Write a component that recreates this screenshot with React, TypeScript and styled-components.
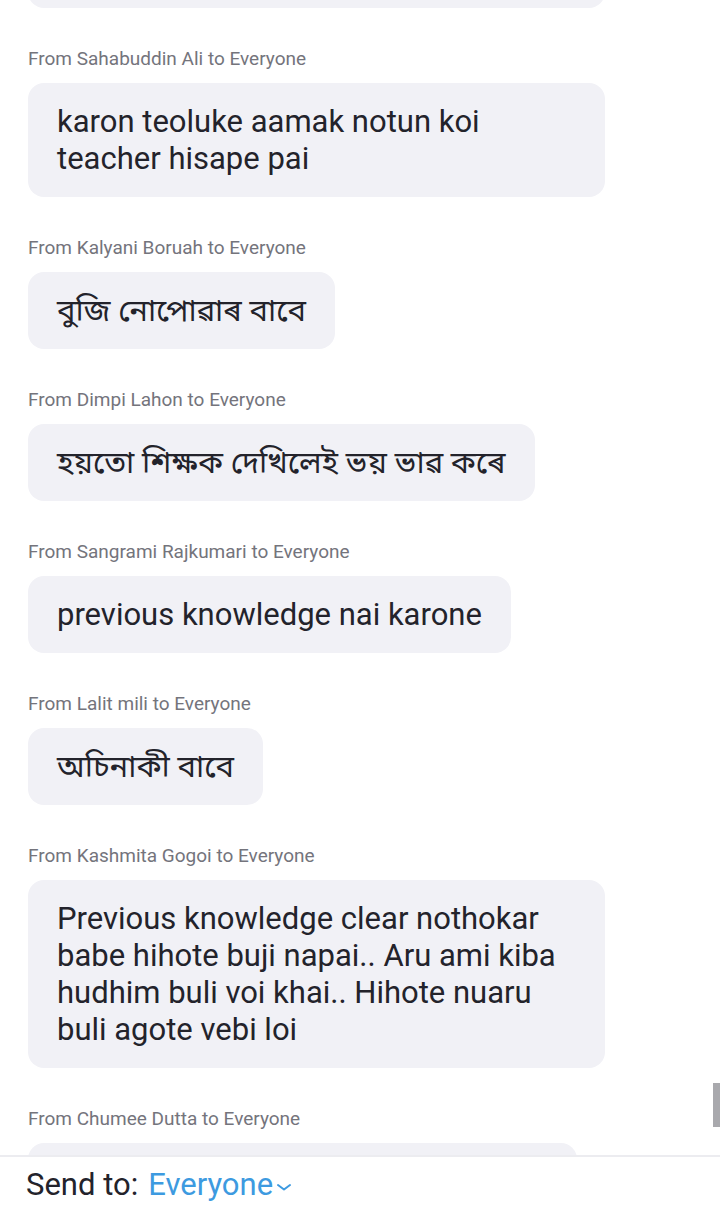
import React from 'react';
import styled, { createGlobalStyle } from 'styled-components';

type Message = {
  from: string,
  text: string
}

const GlobalStyle = createGlobalStyle`
  html, body {
    margin: 0;
    padding: 0;
    background: #ffffff;
  }
  body {
    font-family: Roboto, "Noto Sans", "Noto Sans Bengali", sans-serif;
  }
`;

const Screen = styled.div`
  position: relative;
  width: 720px;
  height: 1220px;
  display: flex;
  flex-direction: column;
  overflow: hidden;
  background: #ffffff;
`;

const ChatList = styled.div`
  flex: 1;
  overflow: hidden;
  padding: 0 28px;
`;

// list is scrolled: only the bottom of the previous bubble shows
const Scrolled = styled.div`
  display: flex;
  flex-direction: column;
  align-items: flex-start;
  margin-top: -106px;
`;

const Item = styled.div`
  display: flex;
  flex-direction: column;
  align-items: flex-start;
  margin-bottom: 40px;
  max-width: 100%;
`;

const Label = styled.div`
  font-size: 19px;
  line-height: 22px;
  color: #74747c;
  margin-bottom: 13px;
`;

const Bubble = styled.div`
  max-width: 577px;
  box-sizing: border-box;
  padding: 20px 29px;
  border-radius: 16px;
  background: #f1f1f6;
  color: #23232b;
  font-size: 31px;
  line-height: 37px;
`;

const ScrollThumb = styled.div`
  position: absolute;
  right: 0;
  top: 1083px;
  width: 7px;
  height: 44px;
  background: #a9a9ad;
`;

const Footer = styled.div`
  flex: none;
  box-sizing: border-box;
  height: 65px;
  border-top: 2px solid #ececf0;
  display: flex;
  align-items: center;
  padding: 0 26px 8px;
  font-size: 31px;
  color: #23232b;
`;

const Target = styled.span`
  color: #3d9ae0;
  margin-left: 10px;
`;

const Chevron = styled.svg`
  margin-left: 2px;
  margin-top: 4px;
`;

const messages: Message[] = [
  { from: 'Sahabuddin Ali', text: 'karon teoluke aamak notun koi teacher hisape pai' },
  { from: 'Kalyani Boruah', text: 'বুজি নোপোৱাৰ বাবে' },
  { from: 'Dimpi Lahon', text: 'হয়তো শিক্ষক দেখিলেই ভয় ভাৱ কৰে' },
  { from: 'Sangrami Rajkumari', text: 'previous knowledge nai karone' },
  { from: 'Lalit mili', text: 'অচিনাকী বাবে' },
  { from: 'Kashmita Gogoi', text: 'Previous knowledge clear nothokar babe hihote buji napai.. Aru ami kiba hudhim buli voi khai.. Hihote nuaru buli agote vebi loi' },
  { from: 'Chumee Dutta', text: 'teacher k dekhi lajuwa paiso karone' },
];

export default function App() {
  return (
    <Screen>
      <GlobalStyle />
      <ChatList>
        <Scrolled>
          <Item>
            <Bubble>Sir r logot kotha kobole voi lage karone kiba bhul hobo buli</Bubble>
          </Item>
          {messages.map((m) => (
            <Item key={m.from}>
              <Label>From {m.from} to Everyone</Label>
              <Bubble>{m.text}</Bubble>
            </Item>
          ))}
        </Scrolled>
      </ChatList>
      <ScrollThumb />
      <Footer>
        Send to:
        <Target>Everyone</Target>
        <Chevron width="18" height="10" viewBox="0 0 18 10">
          <path d="M3 3 L9 7.5 L15 3" fill="none" stroke="#3d9ae0" strokeWidth="2" strokeLinecap="round" strokeLinejoin="round" />
        </Chevron>
      </Footer>
    </Screen>
  );
}
